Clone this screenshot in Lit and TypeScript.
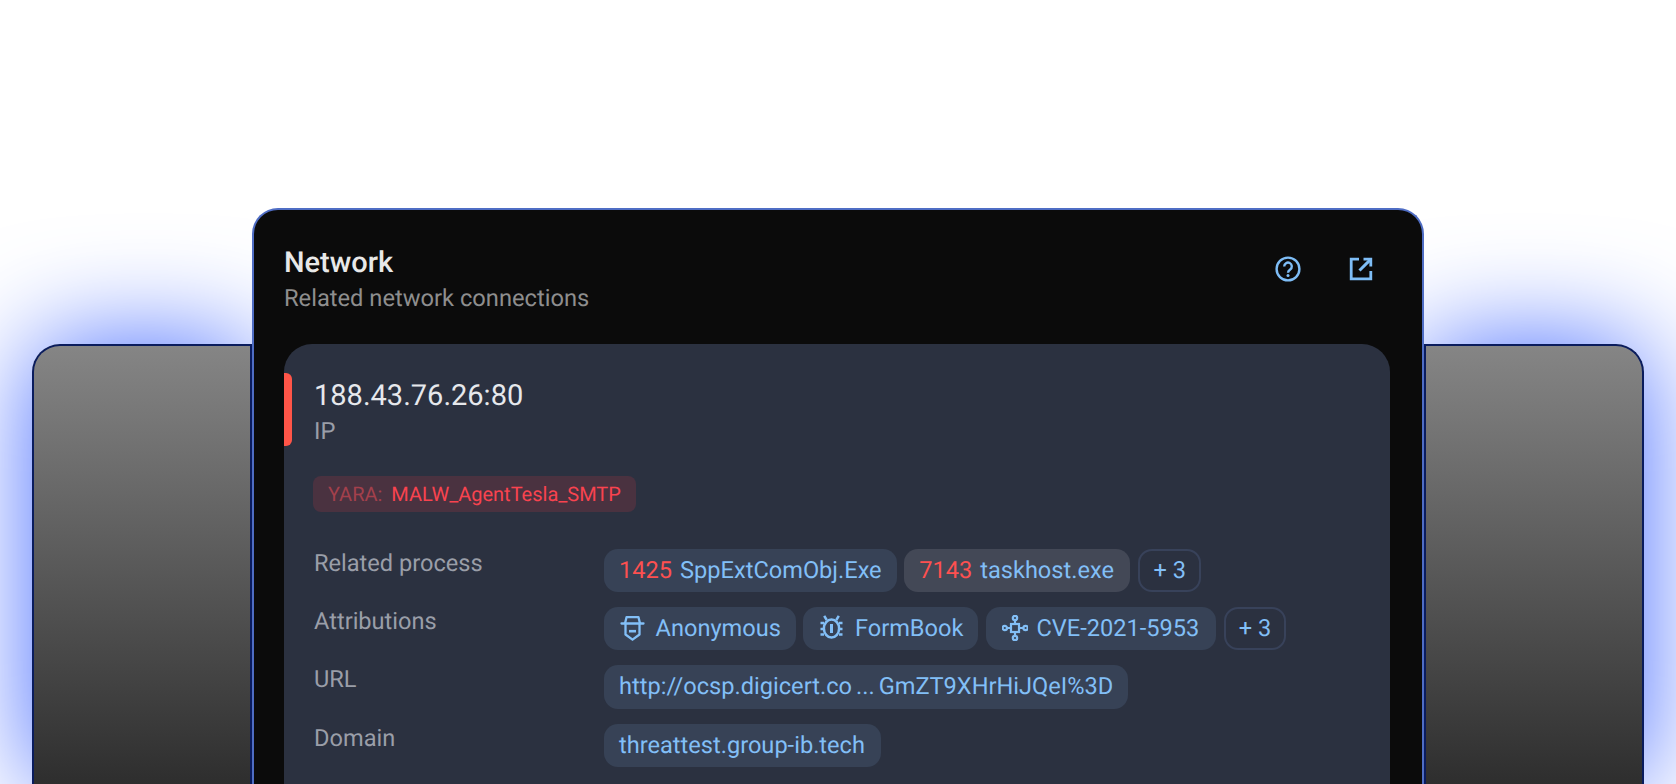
import { LitElement, html, css } from "lit";
import { customElement } from "lit/decorators.js";

const help = html`<svg class="ic" width="30" height="30" viewBox="0 0 30 30" fill="none" stroke="currentColor" stroke-width="2.4"><circle cx="15" cy="15" r="11.4"/><path d="M11.2 12.4a3.8 3.8 0 1 1 6 3.1c-1.3.9-2.2 1.6-2.2 3.2" stroke-linecap="butt"/><circle cx="15" cy="21.6" r="1.5" fill="currentColor" stroke="none"/></svg>`;
const ext = html`<svg class="ic" width="30" height="30" viewBox="0 0 30 30" fill="none" stroke="currentColor" stroke-width="2.8"><path d="M13 5.2H5.2v19.6h19.6V17"/><path d="M17.5 5.2h7.3v7.3" /><path d="M24.4 5.6 13.5 16.5" stroke-width="3"/></svg>`;
const anon = html`<svg width="25" height="26" viewBox="0 0 25 26" fill="none" stroke="currentColor" stroke-width="2.3" stroke-linejoin="round"><path d="M1.5 8.5h22" stroke-linecap="round"/><path d="M5 8.5 6.5 2.2h12l1.5 6.3"/><path d="M5.5 8.5v11l7 5.2 7-5.2v-11"/><path d="M9 16.2h7" stroke-width="2.6"/></svg>`;
const bug = html`<svg width="25" height="25" viewBox="0 0 25 25" fill="none" stroke="currentColor" stroke-width="2.5"><ellipse cx="12.5" cy="13.5" rx="7.6" ry="9"/><path d="M12.5 9v9" stroke-width="3"/><path d="M7.7 5 5.2.8M17.3 5 19.8.8M5 8H1.5M20 8h3.5M5 14H1.5M20 14h3.5M5 19.5H1.5M20 19.5h3.5"/></svg>`;
const vuln = html`<svg width="26" height="26" viewBox="0 0 26 26" fill="none" stroke="currentColor" stroke-width="2.2"><rect x="9" y="9" width="8" height="8"/><circle cx="13" cy="3" r="2.2"/><circle cx="13" cy="23" r="2.2"/><circle cx="2.8" cy="13" r="2.2"/><circle cx="23.6" cy="13" r="2.2"/><path d="M13 5.2V9M13 17v3.8M5 13h4M17 13h4.4"/></svg>`;

@customElement("app-root")
export class AppRoot extends LitElement {
  static styles = css`
    :host { display: block; width: 1676px; height: 784px; overflow: hidden; background: #fff; font-family: Roboto, sans-serif; text-rendering: geometricPrecision; }
    .stage { display: flex; height: 784px; padding: 0 32px; box-sizing: border-box; overflow: hidden; }
    .side { width: 220px; flex: none; margin-top: 344px; height: 440px; box-sizing: border-box; border: 2px solid #0a1c5e; border-bottom: 0; background: linear-gradient(180deg, #858585 0%, #2e2e2e 100%); box-shadow: 0 0 110px 0 #4469ff; }
    .side.l { border-top-left-radius: 28px; }
    .side.r { border-top-right-radius: 28px; }
    .main { position: relative; z-index: 1; flex: none; width: 1172px; box-sizing: border-box; margin-top: 208px; height: 620px; background: #0b0b0b; border: 2px solid #4f6dc4; border-bottom: 0; border-radius: 26px 26px 0 0; padding: 35px 32px 0 30px; }
    .head { display: flex; justify-content: space-between; height: 99px; }
    h1 { margin: 0; font-size: 29px; font-weight: 500; color: #e8e8e8; line-height: 36px; }
    .sub { font-size: 23.7px; color: #8e8e8e; line-height: 35px; }
    .tools { display: flex; gap: 43px; color: #7ebdf6; padding: 9px 14px 0 0; }
    .ic { display: block; }
    .panel { position: relative; background: #2b3140; border-radius: 28px 28px 0 0; height: 500px; padding: 33px 30px 0 30px; box-sizing: border-box; }
    .bar { position: absolute; left: 0; top: 29px; width: 8px; height: 73px; background: #ff5548; border-radius: 0 6px 6px 0; }
    .ip { font-size: 29px; color: #e6e8ec; line-height: 39px; }
    .kind { font-size: 23.7px; color: #9a9ea8; line-height: 30px; }
    .yara { display: inline-flex; gap: 9px; margin-top: 30px; height: 36px; align-items: center; padding: 0 15px; margin-left: -1px; background: #4a3240; border-radius: 8px; font-size: 20px; color: #f9434f; }
    .yara span { color: #a3404c; }
    .rows { display: grid; grid-template-columns: 290px 1fr; row-gap: 15px; margin-top: 37px; }
    .lab { font-size: 23.6px; color: #9a9ea8; line-height: 28px; }
    .chips { display: flex; gap: 7.5px; }
    .chip { display: inline-flex; align-items: center; gap: 8px; height: 43px; padding: 0 15px 2px; box-sizing: border-box; background: #374256; border-radius: 14px; font-size: 23.6px; color: #82bff7; white-space: nowrap; }
    .chip b { font-weight: 400; color: #fd5050; }
    .chip.hov { background: #434856; padding-right: 16px; }
    .chip.ico { gap: 10.5px; padding-left: 16px; }
    .chip.ico.v { gap: 8.5px; padding-right: 17px; }
    .chip.more { background: transparent; border: 2px solid #38425a; padding: 0 13px 2px; }
    .chip.more.first { margin-left: 1px; }
    .chip.url { gap: 4px; height: 44px; }
    .chip.dom { padding-right: 16.5px; }
  `;
  render() {
    return html`<div class="stage">
      <div class="side l"></div>
      <section class="main">
        <div class="head">
          <div><h1>Network</h1><div class="sub">Related network connections</div></div>
          <div class="tools">${help}${ext}</div>
        </div>
        <div class="panel">
          <div class="bar"></div>
          <div class="ip">188.43.76.26:80</div>
          <div class="kind">IP</div>
          <div class="yara"><span>YARA:</span>MALW_AgentTesla_SMTP</div>
          <div class="rows">
            <div class="lab">Related process</div>
            <div class="chips">
              <div class="chip"><b>1425</b>SppExtComObj.Exe</div>
              <div class="chip hov"><b>7143</b>taskhost.exe</div>
              <div class="chip more first">+ 3</div>
            </div>
            <div class="lab">Attributions</div>
            <div class="chips">
              <div class="chip ico">${anon}Anonymous</div>
              <div class="chip ico">${bug}FormBook</div>
              <div class="chip ico v">${vuln}CVE-2021-5953</div>
              <div class="chip more">+ 3</div>
            </div>
            <div class="lab">URL</div>
            <div class="chips"><div class="chip url"><span>http://ocsp.digicert.co</span><span>...</span><span>GmZT9XHrHiJQeI%3D</span></div></div>
            <div class="lab">Domain</div>
            <div class="chips"><div class="chip dom">threattest.group-ib.tech</div></div>
          </div>
        </div>
      </section>
      <div class="side r"></div>
    </div>`;
  }
}
